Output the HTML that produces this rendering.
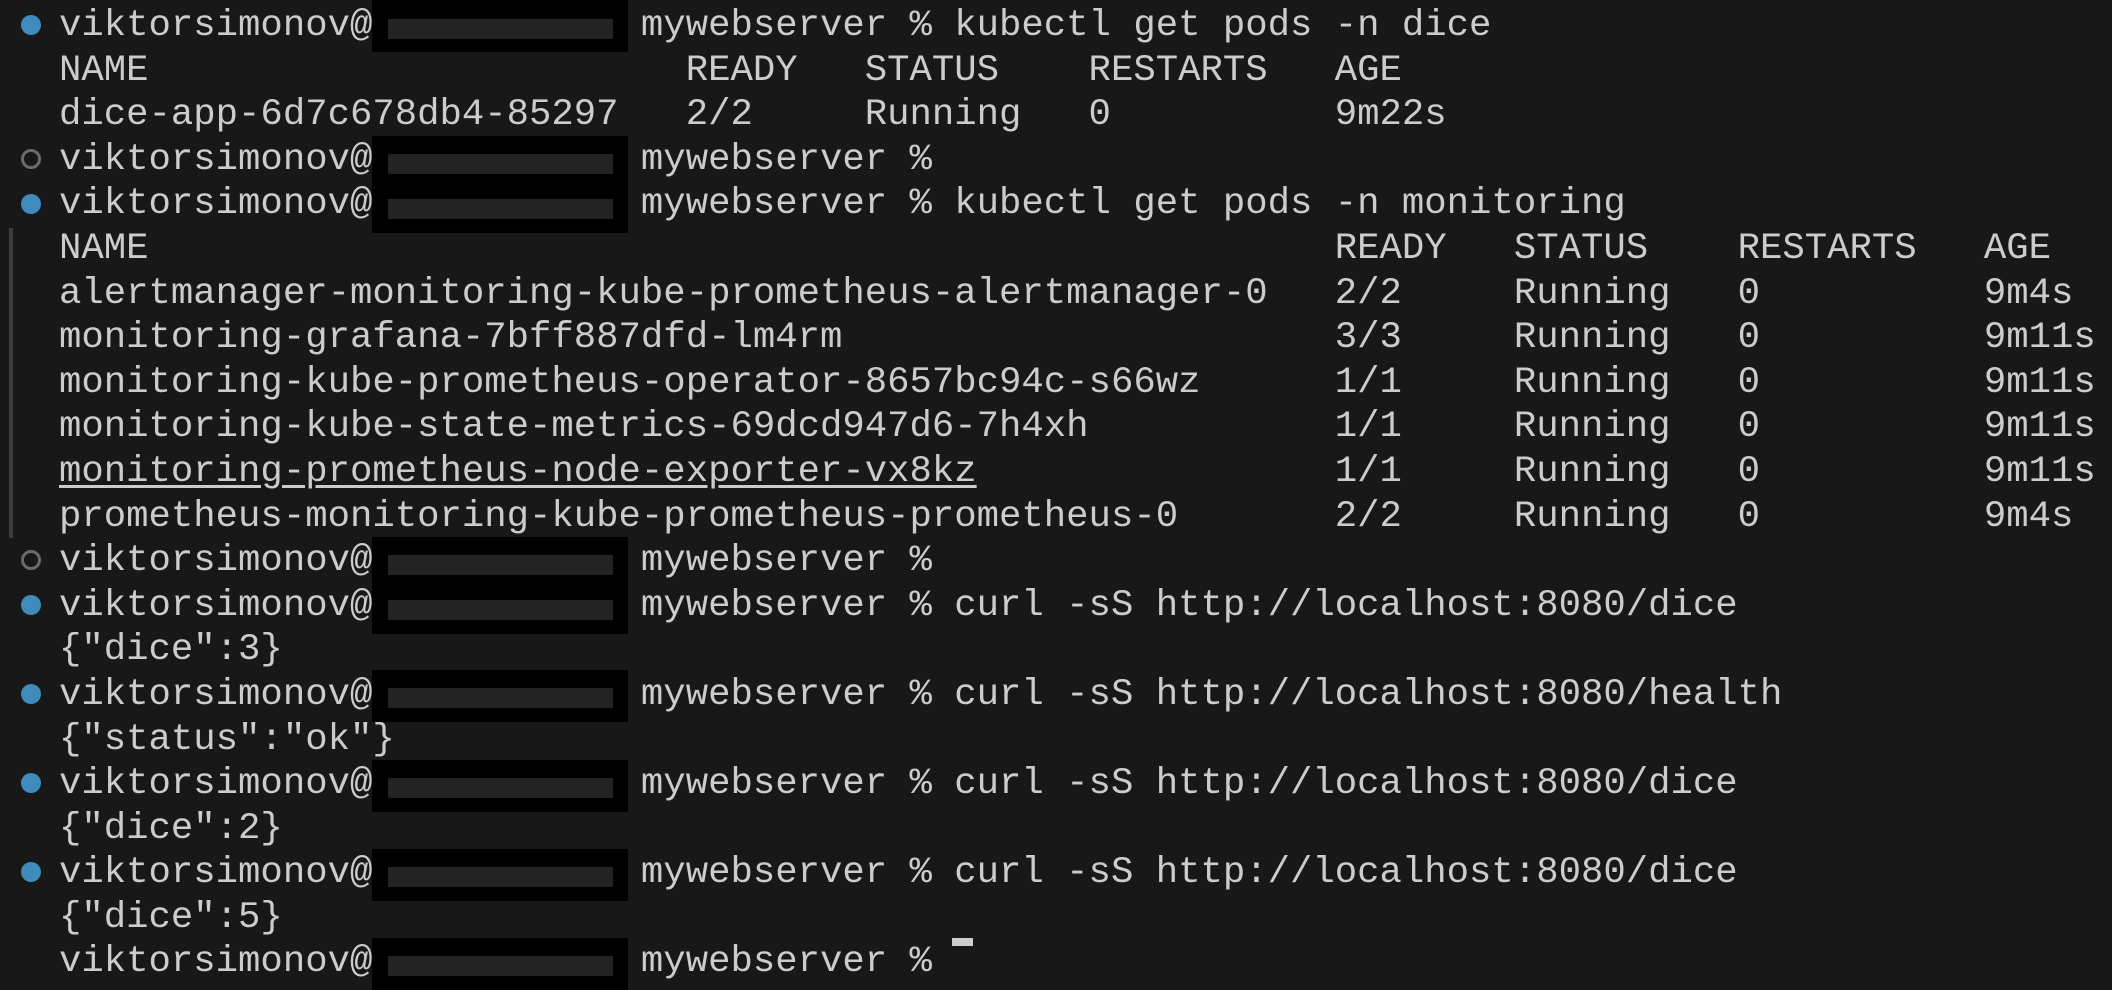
<!DOCTYPE html>
<html><head><meta charset="utf-8"><style>
html,body{margin:0;padding:0;background:#181818;width:2112px;height:944px;overflow:hidden}
pre{position:absolute;left:59px;top:4px;margin:0;font-family:"Liberation Mono",monospace;font-size:37.3px;line-height:44.6px;color:#cccccc;z-index:1}
.u{text-decoration:underline;text-underline-offset:4px}
.box{position:absolute;left:372px;width:256px;background:#000;z-index:2}
.bar{position:absolute;left:16px;width:225px;height:20px;background:#232323}
.dot{position:absolute;left:21px;width:20px;height:20px;border-radius:50%;box-sizing:border-box}
.f{background:#3f8bbb}
.h{border:3px solid #6b6b6b}
.vl{position:absolute;left:9px;width:4px;background:#3c3c3c;top:228px;height:310px}
.cur{position:absolute;left:952px;top:938px;width:21px;height:8px;background:#cccccc}
</style></head><body>
<pre>viktorsimonov@            mywebserver % kubectl get pods -n dice
NAME                        READY   STATUS    RESTARTS   AGE
dice-app-6d7c678db4-85297   2/2     Running   0          9m22s
viktorsimonov@            mywebserver % 
viktorsimonov@            mywebserver % kubectl get pods -n monitoring
NAME                                                     READY   STATUS    RESTARTS   AGE
alertmanager-monitoring-kube-prometheus-alertmanager-0   2/2     Running   0          9m4s
monitoring-grafana-7bff887dfd-lm4rm                      3/3     Running   0          9m11s
monitoring-kube-prometheus-operator-8657bc94c-s66wz      1/1     Running   0          9m11s
monitoring-kube-state-metrics-69dcd947d6-7h4xh           1/1     Running   0          9m11s
<span class="u">monitoring-prometheus-node-exporter-vx8kz</span>                1/1     Running   0          9m11s
prometheus-monitoring-kube-prometheus-prometheus-0       2/2     Running   0          9m4s
viktorsimonov@            mywebserver % 
viktorsimonov@            mywebserver % curl -sS http://localhost:8080/dice
{"dice":3}
viktorsimonov@            mywebserver % curl -sS http://localhost:8080/health
{"status":"ok"}
viktorsimonov@            mywebserver % curl -sS http://localhost:8080/dice
{"dice":2}
viktorsimonov@            mywebserver % curl -sS http://localhost:8080/dice
{"dice":5}
viktorsimonov@            mywebserver % </pre>
<div class="vl"></div>
<div class="box" style="top:0;height:52px"><div class="bar" style="top:19px"></div></div>
<div class="box" style="top:136px;height:97px"><div class="bar" style="top:18px"></div><div class="bar" style="top:63px"></div></div>
<div class="box" style="top:537px;height:97px"><div class="bar" style="top:18px"></div><div class="bar" style="top:63px"></div></div>
<div class="box" style="top:670px;height:52px"><div class="bar" style="top:18px"></div></div>
<div class="box" style="top:760px;height:52px"><div class="bar" style="top:18px"></div></div>
<div class="box" style="top:849px;height:52px"><div class="bar" style="top:18px"></div></div>
<div class="box" style="top:938px;height:52px"><div class="bar" style="top:18px"></div></div>
<div class="dot f" style="top:15px"></div>
<div class="dot h" style="top:149px"></div>
<div class="dot f" style="top:194px"></div>
<div class="dot h" style="top:550px"></div>
<div class="dot f" style="top:595px"></div>
<div class="dot f" style="top:684px"></div>
<div class="dot f" style="top:773px"></div>
<div class="dot f" style="top:862px"></div>
<div class="cur"></div>
</body></html>
